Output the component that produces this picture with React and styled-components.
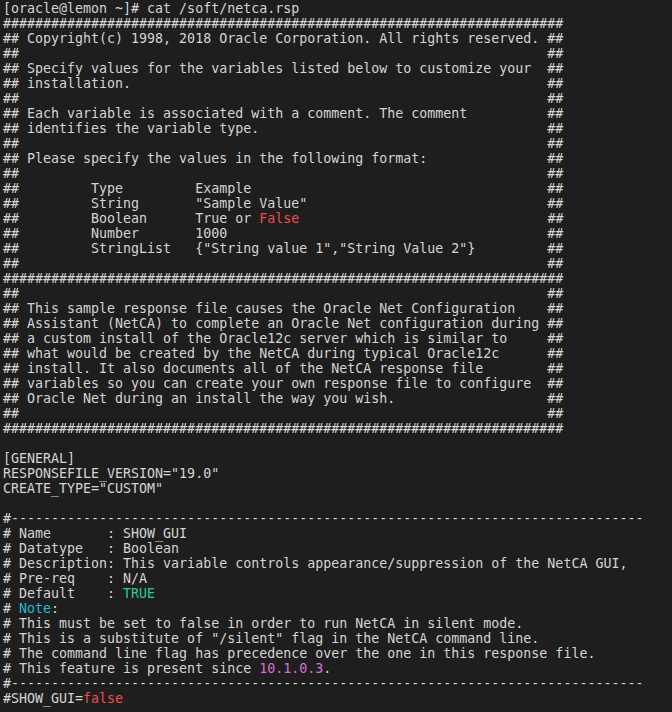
import React from "react";
import styled, { createGlobalStyle } from "styled-components";

const GlobalStyle = createGlobalStyle`
  html, body {
    margin: 0;
    padding: 0;
    background: #1e1e1e;
  }
`;

const Terminal = styled.div`
  background: #1e1e1e;
  color: #d4d4d4;
  font-family: "DejaVu Sans Mono", "Liberation Mono", monospace;
  font-size: 13.3px;
  line-height: 15px;
  padding: 1px 0 0 3px;
  min-height: 712px;
  box-sizing: border-box;
  overflow: hidden;
`;

const Line = styled.div`
  white-space: pre;
  height: 15px;
`;

const Hl = styled.span`
  color: ${(p) => p.$c};
`;

const RED = "#f14c4c";
const GREEN = "#23d18b";
const BLUE = "#29b8db";
const MAGENTA = "#d670d6";

const hashes = "#".repeat(70);
const dashes = "#" + "-".repeat(79);
const pad = (s) => s.padEnd(68, " ") + "##";

const lines = [
  "[oracle@lemon ~]# cat /soft/netca.rsp",
  hashes,
  "## Copyright(c) 1998, 2018 Oracle Corporation. All rights reserved. ##",
  pad("##"),
  pad("## Specify values for the variables listed below to customize your"),
  pad("## installation."),
  pad("##"),
  pad("## Each variable is associated with a comment. The comment"),
  pad("## identifies the variable type."),
  pad("##"),
  pad("## Please specify the values in the following format:"),
  pad("##"),
  pad("##         Type         Example"),
  pad('##         String       "Sample Value"'),
  [["##         Boolean      True or "], ["False", RED], [" ".repeat(31) + "##"]],
  pad("##         Number       1000"),
  pad('##         StringList   {"String value 1","String Value 2"}'),
  pad("##"),
  hashes,
  pad("##"),
  pad("## This sample response file causes the Oracle Net Configuration"),
  pad("## Assistant (NetCA) to complete an Oracle Net configuration during"),
  pad("## a custom install of the Oracle12c server which is similar to"),
  pad("## what would be created by the NetCA during typical Oracle12c"),
  pad("## install. It also documents all of the NetCA response file"),
  pad("## variables so you can create your own response file to configure"),
  pad("## Oracle Net during an install the way you wish."),
  pad("##"),
  hashes,
  "",
  "[GENERAL]",
  'RESPONSEFILE_VERSION="19.0"',
  'CREATE_TYPE="CUSTOM"',
  "",
  dashes,
  "# Name       : SHOW_GUI",
  "# Datatype   : Boolean",
  "# Description: This variable controls appearance/suppression of the NetCA GUI,",
  "# Pre-req    : N/A",
  [["# Default    : "], ["TRUE", GREEN]],
  [["# "], ["Note", BLUE], [":"]],
  "# This must be set to false in order to run NetCA in silent mode.",
  '# This is a substitute of "/silent" flag in the NetCA command line.',
  "# The command line flag has precedence over the one in this response file.",
  [["# This feature is present since "], ["10.1.0.3", MAGENTA], ["."]],
  dashes,
  [["#SHOW_GUI="], ["false", RED]],
];

export default function App() {
  return (
    <>
      <GlobalStyle />
      <Terminal>
        {lines.map((l, i) => (
          <Line key={i}>
            {typeof l === "string"
              ? l
              : l.map(([t, c], j) =>
                  c ? (
                    <Hl key={j} $c={c}>
                      {t}
                    </Hl>
                  ) : (
                    <React.Fragment key={j}>{t}</React.Fragment>
                  )
                )}
          </Line>
        ))}
      </Terminal>
    </>
  );
}
